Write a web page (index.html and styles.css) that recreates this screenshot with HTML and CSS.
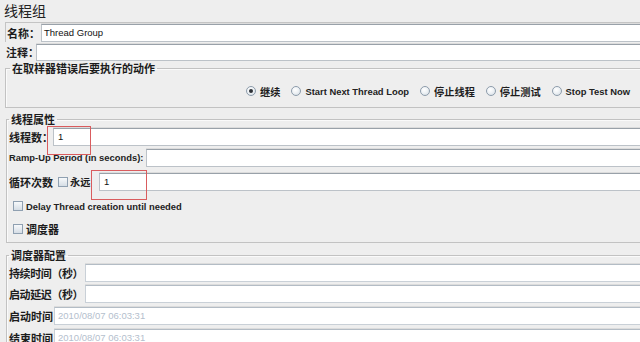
FILE: index.html
```html
<!DOCTYPE html>
<html lang="zh-CN">
<head>
<meta charset="utf-8">
<title>线程组</title>
<link rel="stylesheet" href="styles.css">
</head>
<body>
<div class="page">
  <div class="title">线程组</div>

  <div class="name-row">
    <span class="lbl lbl-name">名称：</span>
    <div class="field"><span class="val">Thread Group</span></div>
  </div>
  <div class="comment-row">
    <span class="lbl lbl-comment">注释：</span>
    <div class="field field-short"></div>
  </div>

  <fieldset class="group g-action">
    <legend class="lg-action">在取样器错误后要执行的动作</legend>
    <div class="radios">
      <span class="opt"><span class="radio on"></span><span class="cjk">继续</span></span>
      <span class="opt"><span class="radio"></span><span class="latin">Start Next Thread Loop</span></span>
      <span class="opt"><span class="radio"></span><span class="cjk">停止线程</span></span>
      <span class="opt"><span class="radio"></span><span class="cjk">停止测试</span></span>
      <span class="opt"><span class="radio"></span><span class="latin">Stop Test Now</span></span>
    </div>
  </fieldset>

  <fieldset class="group g-props">
    <legend>线程属性</legend>
    <div class="row">
      <span class="lbl w-threads">线程数：</span>
      <div class="field"><span class="val val-num">1</span></div>
    </div>
    <div class="row row-ramp">
      <span class="lbl latin w-ramp">Ramp-Up Period (in seconds):</span>
      <div class="field"></div>
    </div>
    <div class="row row-loop">
      <span class="lbl w-loop">循环次数</span>
      <span class="check"></span>
      <span class="lbl w-forever">永远</span>
      <div class="field"><span class="val val-num">1</span></div>
    </div>
    <div class="crow crow-delay">
      <span class="check"></span><span class="latin">Delay Thread creation until needed</span>
    </div>
    <div class="crow crow-sched">
      <span class="check"></span><span class="cjk">调度器</span>
    </div>
  </fieldset>

  <fieldset class="group g-sched">
    <legend>调度器配置</legend>
    <div class="row">
      <span class="lbl w-dur">持续时间（秒）</span>
      <div class="field field-soft"></div>
    </div>
    <div class="row row-s2">
      <span class="lbl w-dur">启动延迟（秒）</span>
      <div class="field field-soft"></div>
    </div>
    <div class="row row-s3">
      <span class="lbl w-time">启动时间</span>
      <div class="field field-soft"><span class="val val-date">2010/08/07 06:03:31</span></div>
    </div>
    <div class="row row-s3">
      <span class="lbl w-time">结束时间</span>
      <div class="field field-soft"><span class="val val-date">2010/08/07 06:03:31</span></div>
    </div>
  </fieldset>

  <div class="mark mark-threads"></div>
  <div class="mark mark-loop"></div>
</div>
</body>
</html>
```

FILE: styles.css
```css
* { box-sizing: border-box; }
html, body { margin: 0; padding: 0; }
body {
  width: 640px;
  height: 342px;
  overflow: hidden;
  background: #eeeeee;
  font-family: "Noto Sans CJK SC", "Liberation Sans", sans-serif;
  font-size: 11px;
  color: #1c1c1c;
}
.page { position: relative; width: 662px; }

.title {
  height: 22px;
  padding-left: 4px;
  font-size: 14px;
  line-height: 21px;
  color: #222;
}

.lbl { flex: none; font-weight: 700; white-space: nowrap; line-height: 14px; }
.cjk { font-weight: 700; white-space: nowrap; }
.latin {
  font-family: "Liberation Sans", sans-serif;
  font-weight: 700;
  font-size: 9.4px;
  white-space: nowrap;
  color: #222;
}

.field {
  flex: 1;
  height: 18px;
  background: #ffffff;
  border: 1px solid #bcc2c8;
  border-top-color: #99a1a9;
  box-shadow: 0 -1px 0 #dcdcdc;
  font-family: "Liberation Sans", sans-serif;
  font-size: 9.5px;
  line-height: 16px;
  padding-left: 2px;
  color: #111;
  white-space: nowrap;
  overflow: hidden;
}
.field-short { height: 17px; }
.field-soft { border-color: #c9d0d7; border-top-color: #b3bcc5; }
.val-num { padding-left: 2px; }
.val-date { color: #b4c0cd; padding-left: 1px; }

/* name / comment panel */
.name-row {
  display: flex;
  height: 20px;
  margin-left: 5px;
  padding-top: 1px;
  border-top: 1px solid #c4c4c4;
  border-left: 1px solid #c4c4c4;
}
.lbl-name { width: 35px; padding-left: 1px; line-height: 18px; }
.comment-row {
  display: flex;
  height: 17px;
  margin-top: 2px;
}
.lbl-comment { width: 36px; padding-left: 6px; line-height: 17px; }

/* group boxes */
.group {
  margin: 0 0 0 6px;
  padding: 0 0 0 2px;
  border: 1px solid #c2c2c2;
  box-shadow: inset 1px 1px 0 #fafafa;
  min-width: 0;
}
.group legend {
  margin-left: 0;
  padding: 0 2px;
  font-weight: 700;
  font-size: 11px;
  line-height: 13px;
}
.g-action { margin-left: 5px; margin-top: 1px; padding-top: 9px; padding-bottom: 9px; }
.g-action .lg-action { margin-left: 2px; }
.g-props { margin-top: 5px; padding-top: 2px; padding-bottom: 6px; }
.g-sched { margin-top: 6px; padding-top: 2px; padding-bottom: 6px; }

.radios {
  display: flex;
  justify-content: flex-end;
  align-items: center;
  gap: 11px;
  height: 14px;
  padding-right: 31px;
}
.radios .cjk { font-size: 10.2px; }
.opt { display: flex; align-items: center; gap: 4px; }
.radio {
  width: 10px;
  height: 10px;
  border-radius: 50%;
  border: 1px solid #8d9cab;
  background: radial-gradient(circle at 40% 35%, #ffffff 0%, #eef2f5 45%, #cfd8e0 100%);
  position: relative;
}
.radio.on::after {
  content: "";
  position: absolute;
  left: 2px;
  top: 2px;
  width: 4px;
  height: 4px;
  border-radius: 50%;
  background: #2d3136;
}

.check {
  flex: none;
  width: 10px;
  height: 10px;
  border: 1px solid #8fa0b1;
  background: linear-gradient(#f7f9fb, #d5dde5);
}

.row { display: flex; align-items: center; height: 18px; }
.row-ramp { margin-top: 3px; }
.row-loop { margin-top: 6px; }
.row-s2 { margin-top: 3px; }
.row-s3 { margin-top: 4px; }

.w-threads { width: 44px; }
.w-ramp { width: 137px; }
.w-loop { width: 49px; }
.row-loop .check { margin-right: 2px; }
.w-forever { width: 29px; font-size: 10.2px; }
.w-dur { width: 76px; letter-spacing: -0.4px; }
.w-time { width: 45px; }

.crow { display: flex; align-items: center; height: 14px; padding-left: 4px; gap: 3px; }
.crow-delay { margin-top: 8px; }
.crow-sched { margin-top: 9px; }

.mark { position: absolute; border: 1px solid #d95c5e; }
.mark-threads { left: 47px; top: 126px; width: 44px; height: 29px; }
.mark-loop { left: 91px; top: 170px; width: 56px; height: 30px; }
```
